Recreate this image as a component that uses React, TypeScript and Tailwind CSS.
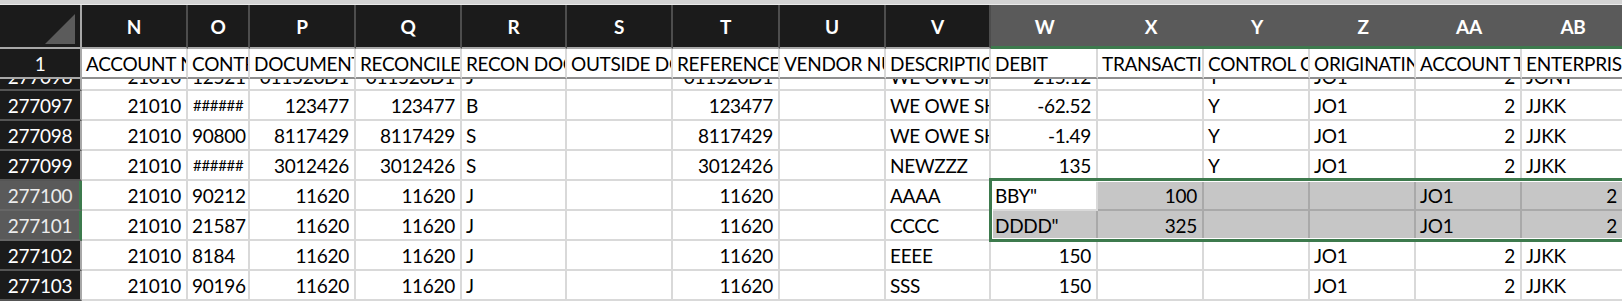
import clsx from "clsx";

type Col = { key: string; w: string };

const cols: Col[] = [
  { key: "N", w: "w-[106px]" },
  { key: "O", w: "w-[62px]" },
  { key: "P", w: "w-[106px]" },
  { key: "Q", w: "w-[106px]" },
  { key: "R", w: "w-[105px]" },
  { key: "S", w: "w-[106px]" },
  { key: "T", w: "w-[107px]" },
  { key: "U", w: "w-[106px]" },
  { key: "V", w: "w-[105px]" },
  { key: "W", w: "w-[107px]" },
  { key: "X", w: "w-[106px]" },
  { key: "Y", w: "w-[106px]" },
  { key: "Z", w: "w-[106px]" },
  { key: "AA", w: "w-[106px]" },
  { key: "AB", w: "w-[102px]" },
];

const selCols = ["W", "X", "Y", "Z", "AA", "AB"];

const titles = [
  "ACCOUNT NUMBER",
  "CONTROL",
  "DOCUMENT",
  "RECONCILE",
  "RECON DOC",
  "OUTSIDE DOC",
  "REFERENCE",
  "VENDOR NUMBER",
  "DESCRIPTION",
  "DEBIT",
  "TRANSACTION",
  "CONTROL CODE",
  "ORIGINATING",
  "ACCOUNT TYPE",
  "ENTERPRISE",
];

const partial = ["21010", "12521", "011520D1", "011520D1", "J", "", "011520D1", "", "WE OWE SH", "215.12", "", "Y", "JO1", "2", "JONT"];

const rows: { id: string; sel?: boolean; cells: string[] }[] = [
  { id: "277097", cells: ["21010", "######", "123477", "123477", "B", "", "123477", "", "WE OWE SHIP", "-62.52", "", "Y", "JO1", "2", "JJKK"] },
  { id: "277098", cells: ["21010", "90800", "8117429", "8117429", "S", "", "8117429", "", "WE OWE SHIP", "-1.49", "", "Y", "JO1", "2", "JJKK"] },
  { id: "277099", cells: ["21010", "######", "3012426", "3012426", "S", "", "3012426", "", "NEWZZZ", "135", "", "Y", "JO1", "2", "JJKK"] },
  { id: "277100", sel: true, cells: ["21010", "90212", "11620", "11620", "J", "", "11620", "", "AAAA", 'BBY"', "100", "", "", "JO1", "2"] },
  { id: "277101", sel: true, cells: ["21010", "21587", "11620", "11620", "J", "", "11620", "", "CCCC", 'DDDD"', "325", "", "", "JO1", "2"] },
  { id: "277102", cells: ["21010", "8184", "11620", "11620", "J", "", "11620", "", "EEEE", "150", "", "", "JO1", "2", "JJKK"] },
  { id: "277103", cells: ["21010", "90196", "11620", "11620", "J", "", "11620", "", "SSS", "150", "", "", "JO1", "2", "JJKK"] },
];

// numbers (and the D1 doc refs) sit on the right, text on the left; O holds text
const isNum = (v: string, key: string) => key !== "O" && /^-?\d[\dA-Z.]*$/.test(v);

function Cell({ col, value, sel, active, h = "h-full", border = "border-[#d9d9d9]" }: { col: Col; value: string; sel?: boolean; active?: boolean; h?: string; border?: string }) {
  const right = isNum(value, col.key);
  return (
    <div
      className={clsx(
        col.w,
        h,
        "shrink-0 flex items-center overflow-hidden whitespace-nowrap border-r-2 border-b-2",
        right ? "justify-end pr-[5px]" : "pl-[4px]",
        value.startsWith("#") && "text-[15px] pl-[5px]",
        sel && !active ? "bg-[#c6c6c6] border-[#a9a9a9]" : clsx("bg-white", border)
      )}
    >
      {value}
    </div>
  );
}

export default function App() {
  return (
    <div className="relative w-[1622px] h-[302px] overflow-hidden bg-white text-black text-[19px] tracking-[-0.3px] font-['Lato','Open_Sans',sans-serif] leading-none">
      <div className="h-[5px] bg-[#d3d3d3] border-b border-[#ebebeb]" />

      {/* column letters */}
      <div className="flex h-[44px]">
        <div className="w-[82px] shrink-0 bg-[#1b1b1b] border-r-2 border-b-2 border-[#a8a8a8] flex items-end justify-end pr-[4px] pb-[3px]">
          <svg width="31" height="30" viewBox="0 0 31 30">
            <polygon points="30,0 30,30 0,30" fill="#5b5b5b" />
          </svg>
        </div>
        {cols.map((c) =>
          selCols.includes(c.key) ? (
            <div key={c.key} className={clsx(c.w, "shrink-0 bg-[#5a5a5a] border-b-[3px] border-[#3d7a4d] flex items-center justify-center text-white font-bold pt-[2px]")}>
              {c.key}
            </div>
          ) : (
            <div key={c.key} className={clsx(c.w, "shrink-0 bg-[#1b1b1b] border-r-2 border-[#4d4d4d] border-b-2 border-b-[#a8a8a8] flex items-center justify-center text-white font-bold")}>
              {c.key}
            </div>
          )
        )}
      </div>

      {/* frozen header row */}
      <div className="flex h-[30px]">
        <div className="w-[82px] shrink-0 bg-[#1b1b1b] border-r-2 border-b-2 border-[#a8a8a8] flex items-center justify-center text-white">1</div>
        {cols.map((c, i) => (
          <Cell key={c.key} col={c} value={titles[i]} border="border-[#d9d9d9] border-b-[#8e8e8e]" />
        ))}
      </div>

      {/* row cut by the freeze line */}
      <div className="h-[12px] overflow-hidden">
        <div className="flex -mt-[16px]">
          <div className="w-[82px] h-[28px] shrink-0 bg-[#1b1b1b] border-r-2 border-[#a8a8a8] border-b-2 border-b-[#555555] flex items-center justify-center text-white">277096</div>
          {cols.map((c, i) => (
            <Cell key={c.key} col={c} value={partial[i]} h="h-[28px]" />
          ))}
        </div>
      </div>

      {rows.map((r) => (
        <div key={r.id} className="flex h-[30px]">
          <div
            className={clsx(
              "w-[82px] shrink-0 border-b-2 flex items-center justify-center",
              r.sel
                ? "bg-[#5a5a5a] text-[#ececec] border-r-[3px] border-r-[#3d7a4d] border-b-[#666666] pl-[1px]"
                : "bg-[#1b1b1b] text-white border-r-2 border-r-[#a8a8a8] border-b-[#555555]"
            )}
          >
            {r.id}
          </div>
          {cols.map((c, i) => {
            const inSel = !!r.sel && selCols.includes(c.key);
            return <Cell key={c.key} col={c} value={r.cells[i]} sel={inSel} active={r.id === "277100" && c.key === "W"} />;
          })}
        </div>
      ))}

      {/* selection outline */}
      <div className="absolute left-[989px] top-[178px] -right-[10px] h-[64px] border-[3px] border-[#3d7a4d] shadow-[inset_0_0_0_1px_#ffffff]" />
    </div>
  );
}
